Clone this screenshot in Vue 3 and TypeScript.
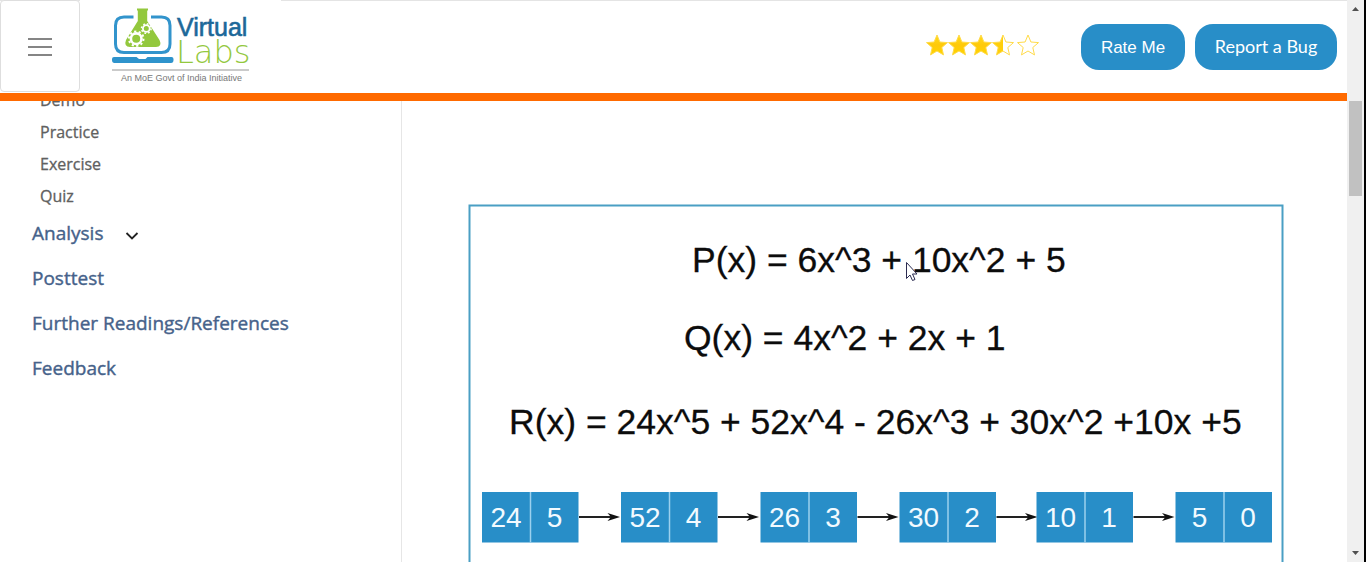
<script setup lang="ts">
interface PolyNode {
  x: number
  coef: number
  exp: number
}

const subItems: string[] = ['Demo', 'Practice', 'Exercise', 'Quiz']
const sections: { label: string; expandable: boolean }[] = [
  { label: 'Analysis', expandable: true },
  { label: 'Posttest', expandable: false },
  { label: 'Further Readings/References', expandable: false },
  { label: 'Feedback', expandable: false },
]

const stars = [
  { x: 11, fill: 'url(#gold)' },
  { x: 33, fill: 'url(#gold)' },
  { x: 55, fill: 'url(#gold)' },
  { x: 77, fill: 'url(#half)' },
  { x: 102, fill: 'none' },
]

function starPoints(cx: number): string {
  const pts: string[] = []
  for (let i = 0; i < 10; i++) {
    const r = i % 2 === 0 ? 11 : 5
    const a = -Math.PI / 2 + (i * Math.PI) / 5
    pts.push(`${(cx + r * Math.cos(a)).toFixed(1)},${(12 + r * Math.sin(a)).toFixed(1)}`)
  }
  return pts.join(' ')
}

const nodes: PolyNode[] = [
  { x: 28, coef: 24, exp: 5 },
  { x: 306, coef: 52, exp: 4 },
  { x: 585, coef: 26, exp: 3 },
  { x: 863, coef: 30, exp: 2 },
  { x: 1137, coef: 10, exp: 1 },
  { x: 1415, coef: 5, exp: 0 },
]
</script>

<template>
  <div class="window">
    <div class="page">
      <header class="header">
        <button class="menu" type="button" aria-label="Menu">
          <svg width="24" height="20" viewBox="0 0 24 20" fill="none" stroke="#858585" stroke-width="2">
            <path d="M0 2H24M0 10H24M0 18H24" />
          </svg>
        </button>
        <a class="logo" href="#" aria-label="Virtual Labs">
          <svg width="160" height="90" viewBox="0 0 160 90">
            <path
              d="M33.500 17H24Q15.500 17 15.500 25.500V44Q15.500 52.500 24 52.500H61.500Q70 52.500 70 44V25.500Q70 17 61.500 17H51"
              fill="none" stroke="#3294cc" stroke-width="3"
            />
            <path d="M14 57H36.500L39 59H45.500L47.500 57H71.500Q73.500 57 73.500 59V60Q73.500 63 71 63H14.500Q12 63 12 60V59Q12 57 14 57Z" fill="#2e93cc" />
            <path d="M37 8.500H48V10.500H47.200V21L59.500 40Q62.500 46.500 56 47H30Q23.500 46.500 26 40L37.800 21V10.500H37Z" fill="#93c83d" />
            <g fill="none" stroke="#fff">
              <circle cx="36.200" cy="38.700" r="5.300" stroke-width="2.600" />
              <circle cx="36.200" cy="38.700" r="7.300" stroke-width="2" stroke-dasharray="2.200 2.387" />
              <circle cx="46.300" cy="28.500" r="3.400" stroke-width="1.800" />
              <circle cx="46.300" cy="28.500" r="4.800" stroke-width="1.500" stroke-dasharray="1.700 2.070" />
            </g>
            <text x="77" y="36" class="logo-virtual">Virtual</text>
            <text x="76" y="63" class="logo-labs">Labs</text>
            <path d="M12 70H149" stroke="#969696" />
            <text x="21" y="81" class="logo-tag">An MoE Govt of India Initiative</text>
          </svg>
        </a>
        <div class="actions">
          <svg class="stars" width="114" height="24" viewBox="0 0 114 24" role="img" aria-label="Rating 3.5 of 5">
            <defs>
              <linearGradient id="gold" x1="0" y1="0" x2="0" y2="1">
                <stop offset="0" stop-color="#ffdc1c" />
                <stop offset="0.5" stop-color="#ffc90a" />
                <stop offset="1" stop-color="#ffd400" />
              </linearGradient>
              <linearGradient id="half">
                <stop offset="0.5" stop-color="#ffcf0a" />
                <stop offset="0.5" stop-color="#fff" />
              </linearGradient>
            </defs>
            <polygon
              v-for="s in stars" :key="s.x" :points="starPoints(s.x)" :fill="s.fill"
              stroke="#ffdb4a" stroke-linejoin="round"
            />
          </svg>
          <button class="pill rate" type="button">Rate Me</button>
          <button class="pill report" type="button">Report a Bug</button>
        </div>
      </header>

      <div class="body">
        <nav class="sidebar">
          <ul class="sub">
            <li v-for="item in subItems" :key="item"><a href="#">{{ item }}</a></li>
          </ul>
          <ul class="sections">
            <li v-for="s in sections" :key="s.label">
              <a href="#">{{ s.label }}</a>
              <button v-if="s.expandable" class="chevron" type="button" aria-label="Expand Analysis">
                <svg width="14" height="10" viewBox="0 0 14 10" fill="none" stroke="#222" stroke-width="1.800">
                  <path d="M1.500 3L7 8.500L12.500 3" />
                </svg>
              </button>
            </li>
          </ul>
        </nav>

        <main class="content">
          <svg class="figure" viewBox="0 0 1632 1000">
            <rect x="3" y="3" width="1626" height="994" fill="#fff" stroke="#4a9fc4" stroke-width="4" />
            <g class="equation">
              <text x="448" y="136">P(x) = 6x^3 + 10x^2 + 5</text>
              <text x="432" y="291">Q(x) = 4x^2 + 2x + 1</text>
              <text x="82" y="460">R(x) = 24x^5 + 52x^4 - 26x^3 + 30x^2 +10x +5</text>
            </g>
            <g v-for="(n, i) in nodes" :key="n.x">
              <rect :x="n.x" y="576" width="193" height="101" fill="#288ec8" />
              <path :d="`M${n.x + 97} 576v101`" stroke="#9bd0ee" stroke-width="3" />
              <text class="digit" :x="n.x + 48" y="645">{{ n.coef }}</text>
              <text class="digit" :x="n.x + 145" y="645">{{ n.exp }}</text>
              <g v-if="i < nodes.length - 1">
                <path :d="`M${n.x + 194} 626h66`" stroke="#222" stroke-width="4" />
                <path :d="`M${n.x + 276} 626l-25 -8l7 8l-7 8z`" fill="#111" />
              </g>
            </g>
            <path
              d="M877 117V149L884 142L889 153L894 151L889 140H898Z"
              fill="#fff" stroke="#2b2b50" stroke-width="2"
            />
          </svg>
        </main>
      </div>
    </div>

    <div class="scrollbar" aria-hidden="true">
      <svg width="17" height="18" viewBox="0 0 17 18"><path d="M5 11L8.500 7L12 11Z" fill="#505050" /></svg>
      <div class="track"><div class="thumb"></div></div>
      <svg width="17" height="18" viewBox="0 0 17 18"><path d="M5 7L8.500 11L12 7Z" fill="#505050" /></svg>
    </div>
  </div>
</template>

<style>
body {
  margin: 0;
  background: #fff;
}
</style>

<style scoped>
.window {
  display: flex;
  height: 100vh;
  overflow: hidden;
  box-sizing: border-box;
  border-right: 2px solid #000;
  font-family: "Open Sans", sans-serif;
}

.page {
  flex: 1;
  min-width: 0;
  display: flex;
  flex-direction: column;
}

.header {
  display: flex;
  align-items: stretch;
  height: 93px;
  flex: none;
  border-bottom: 8px solid #ff6a00;
  background: #fff;
  box-shadow: inset 0 1px #e4e4e4;
}

.menu {
  width: 80px;
  height: 92px;
  padding: 2px 0 0;
  display: flex;
  align-items: center;
  justify-content: center;
  background: #fff;
  border: 1px solid #dedede;
  border-radius: 4px;
}

.logo {
  width: 181px;
  padding-left: 20px;
  background: #fff;
}

.logo svg {
  display: block;
}

.logo-virtual {
  font: 25px "Liberation Sans", Arial, sans-serif;
  fill: #1c6899;
  stroke: #1c6899;
  stroke-width: 0.6px;
}

.logo-labs {
  font: 200 32px "DejaVu Sans", sans-serif;
  fill: #93c83d;
}

.logo-tag {
  font: 9px "Liberation Sans", Arial, sans-serif;
  fill: #777;
}

.actions {
  margin-left: auto;
  padding-right: 10px;
  display: flex;
  align-items: center;
  gap: 10px;
}

.stars {
  margin-right: 31px;
  margin-bottom: 2px;
}

.pill {
  height: 46px;
  border: 0;
  border-radius: 18px;
  background: #288ec8;
  color: #fff;
}

.rate {
  width: 104px;
  padding: 2px 0 0;
  font: 17px "Liberation Sans", Arial, sans-serif;
}

.report {
  width: 142px;
  padding: 0 0 2px;
  font: 18px Lato, sans-serif;
}

.body {
  flex: 1;
  min-height: 0;
  display: flex;
  overflow: hidden;
}

.sidebar {
  width: 402px;
  flex: none;
  box-sizing: border-box;
  border-right: 1px solid #e6e6e6;
}

ul {
  list-style: none;
  margin: 0;
  padding: 0;
}

.sub {
  margin-top: -17px;
  padding-left: 40px;
}

.sub li {
  height: 32px;
  line-height: 32px;
  font-size: 16px;
}

.sub a {
  color: #606060;
  -webkit-text-stroke: 0.3px #606060;
}

a {
  text-decoration: none;
}

.sections {
  padding-left: 32px;
}

.sections li {
  display: flex;
  align-items: center;
  height: 45px;
  line-height: 43px;
  font-size: 19px;
}

.sections a {
  padding-bottom: 2px;
  color: #46628a;
  -webkit-text-stroke: 0.4px #46628a;
}

.chevron {
  margin-left: 22px;
  padding: 0;
  border: 0;
  background: none;
  display: flex;
}

.content {
  flex: 1;
  min-width: 0;
  padding: 103px 63px 0 66px;
}

.figure {
  display: block;
  width: 100%;
}

.equation {
  font: 71px "Liberation Sans", Arial, sans-serif;
  fill: #0c0c0c;
  stroke: #0c0c0c;
  stroke-width: 0.6px;
}

.digit {
  font: 56px "Liberation Sans", Arial, sans-serif;
  fill: #f2faff;
  text-anchor: middle;
}

.scrollbar {
  width: 17px;
  flex: none;
  display: flex;
  flex-direction: column;
  background: #f0f0f0;
}

.track {
  flex: 1;
  padding: 83px 2px 0;
}

.thumb {
  height: 95px;
  background: #c1c1c1;
}
</style>
